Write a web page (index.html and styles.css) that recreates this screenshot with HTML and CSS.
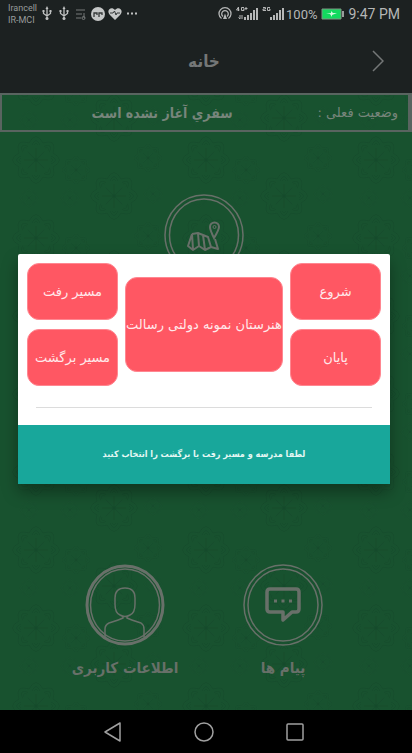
FILE: index.html
```html
<!DOCTYPE html>
<html lang="fa" dir="rtl">
<head>
<meta charset="utf-8">
<meta name="viewport" content="width=device-width, initial-scale=1">
<title>خانه</title>
<link rel="stylesheet" href="styles.css">
</head>
<body>
<div class="phone">
  <div class="statusbar" dir="ltr">
    <div class="carriers"><span>Irancell</span><span>IR-MCI</span></div>
    <svg class="notices" width="98" height="16" viewBox="0 0 98 16" fill="none" stroke="#bfc1c1">
      <g id="usb"><path d="M5 2v10M1.500 5v2.500L5 10l3.500-2.500V5" stroke-width="1.300"/><path d="M3.500 3L5 0l1.500 3zM.5 4h2v2h-2zM7.500 4h2v2h-2z" fill="#bfc1c1" stroke="none"/><circle cx="5" cy="12.500" r="1.500" fill="#bfc1c1" stroke="none"/></g>
      <use href="#usb" x="17"/>
      <path d="M34 4h9M34 8h6M34 12h5M42 7v5" stroke="#777b7b"/><circle cx="41.500" cy="12" r="1.500" stroke="#777b7b"/>
      <circle cx="56" cy="8" r="7" fill="#c5c7c7" stroke="none"/><path d="M52 11V7h3v2M57 11V7h3v2" stroke="#343838" stroke-width="1.300"/>
      <path d="M73 14L67.500 8.500C64 4 69.500-.5 73 4c3.500-4.500 9 0 5.500 4.500z" fill="#c5c7c7" stroke="none"/><path d="M68 7h3l1.500-2 1.500 4 1-2h3" stroke="#343838"/>
      <path d="M85 7.500h2M89 7.500h2M93 7.500h2" stroke-width="2"/>
    </svg>
    <svg class="signals" width="66" height="16" viewBox="0 0 66 16" fill="none" stroke="#b5b7b7">
      <path d="M3.500 12.500a6 6 0 1 1 7 0M5 10.500a3.300 3.300 0 1 1 4 0" stroke-width="1.300"/><path d="M7 7.500L9 13H5z" fill="#b5b7b7" stroke="none"/>
      <path d="M20.500 1l-2 3h3M20.500 1v4M26 1.500h-2.500v3H26V3h-1M28 1v3M26.500 2.500h3M22 9v4M20.500 11.500L22 13M24 13V9" />
      <path d="M27 14v-3M30 14V9M33 14V7M36 14V4M39 14V2" stroke-width="2"/>
      <path d="M45 1.500h2.500v1.500H45v1.500h3M52 1.500h-2.500v3H52V3h-1"/>
      <path d="M53 14v-3M56 14V9M59 14V7M62 14V4M65 14V2" stroke-width="2"/>
    </svg>
    <span class="percent">100%</span>
    <svg class="battery" width="23" height="12" viewBox="0 0 23 12"><path d="M1 1h19v10H1z" fill="#13d95f" stroke="#7c9683"/><path d="M21 3h2v6h-2z" fill="#9a9d9d"/><path d="M5 6l5-1V3l2 2h4l-5 2v2L9 6z" fill="#d5f8df"/></svg>
    <span class="clock">9:47 PM</span>
  </div>

  <header class="header">
    <h1>خانه</h1>
    <button class="back" type="button" aria-label="بازگشت">
      <svg width="12" height="22" viewBox="0 0 12 22" fill="none" stroke="#747777" stroke-width="1.500"><path d="M1 1l10 10L1 21"/></svg>
    </button>
  </header>

  <main class="main">
    <svg class="pattern" width="100%" height="100%" aria-hidden="true">
      <defs>
        <g id="petals"><path id="petal" d="M0 0V-12M-4-15Q0-24 4-15M-2-15Q0-19 2-15M-7-17Q0-30 7-17"/><use href="#petal" transform="rotate(45)"/><use href="#petal" transform="rotate(90)"/><use href="#petal" transform="rotate(135)"/><use href="#petal" transform="rotate(180)"/><use href="#petal" transform="rotate(225)"/><use href="#petal" transform="rotate(270)"/><use href="#petal" transform="rotate(315)"/><circle r="2" fill="#103f26"/></g>
        <pattern id="flowers" width="170" height="78" patternUnits="userSpaceOnUse" patternTransform="translate(0 38)">
          <g fill="none" stroke="#124628" stroke-width="1" opacity=".45">
            <use href="#petals" x="36" y="28"/>
            <use href="#petals" x="114" y="64"/><use href="#petals" x="114" y="-14"/>
            <use href="#petals" transform="translate(76 38) scale(.6)"/><use href="#petals" transform="translate(148 26) scale(.6)"/><use href="#petals" transform="translate(70 66) scale(.4)"/><use href="#petals" transform="translate(29 66) scale(.4)"/><use href="#petals" transform="translate(153 62) scale(.4)"/>
          </g>
        </pattern>
      </defs>
      <rect width="100%" height="100%" fill="#18522f"/><rect width="100%" height="100%" fill="url(#flowers)"/>
    </svg>
    <section class="trip">
      <span class="trip-label">وضعیت فعلی :</span>
      <strong class="trip-value">سفري آغاز نشده است</strong>
    </section>
    <nav class="menu">
      <a class="item map" href="#map" aria-label="نقشه">
        <svg width="80" height="82" viewBox="0 0 80 82" fill="none" stroke="#687069"><ellipse cx="40" cy="41" rx="39" ry="40" stroke-width="1.500"/><ellipse cx="40" cy="41" rx="34.500" ry="36" stroke-width="1.500"/><path d="M28 40l-4 12 5 4 6-4 6 4 6-3 7 2-3-10M28 40l6-1 5 2 2 15M34 39l1 13M28 40l1 15M39 41l5 2 3 10" stroke-width="2" stroke-linejoin="round"/><path d="M50 44c-3-6-4-9-4-11a4.500 4.500 0 0 1 9 0c0 2-2 6-5 11z" stroke-width="2"/><circle cx="50.500" cy="33" r="1.500"/></svg>
      </a>
      <div class="row">
        <a class="item" href="#messages">
          <svg width="80" height="82" viewBox="0 0 80 82" fill="none" stroke="#687069"><ellipse cx="40" cy="41" rx="39" ry="40" stroke-width="1.500"/><ellipse cx="40" cy="41" rx="35" ry="36" stroke-width="1.500"/><path d="M27 25h26q3 0 3 3v17q0 3-3 3h-4l-9 8v-8H27q-3 0-3-3V28q0-3 3-3z" stroke-width="3.500" stroke-linejoin="round"/><path d="M31 37h3M38.500 37h3M46 37h3" stroke-width="3"/></svg>
          <span>پیام ها</span>
        </a>
        <a class="item" href="#profile">
          <svg width="80" height="82" viewBox="0 0 80 82" fill="none" stroke="#687069"><ellipse cx="40" cy="41" rx="38" ry="39" stroke-width="3"/><ellipse cx="40" cy="41" rx="34.500" ry="36" stroke-width="1.500"/><path d="M30 34q0-10 10-10t10 10v6q0 9-5 11-5 3-10 0-5-2-5-11zM38 52v2q-4 2-14 5-4 2-4 6v8M42 52v2q4 2 14 5 3 2 3 6v8" stroke-width="1.500"/></svg>
          <span>اطلاعات کاربری</span>
        </a>
      </div>
    </nav>
  </main>

  <div class="navbar" dir="ltr">
    <button type="button" aria-label="Back"><svg width="20" height="22" viewBox="0 0 20 22"><path d="M17 2v18L2 11z"/></svg></button>
    <button type="button" aria-label="Home"><svg width="20" height="22" viewBox="0 0 20 22"><circle cx="10" cy="11" r="9"/></svg></button>
    <button type="button" aria-label="Recent"><svg width="20" height="22" viewBox="0 0 20 22"><rect x="2" y="3" width="16" height="16" rx="1"/></svg></button>
  </div>

  <div class="overlay">
    <div class="dialog" role="dialog" aria-label="انتخاب مسیر">
      <div class="choices">
        <div class="stack"><button type="button">شروع</button><button type="button">پایان</button></div>
        <button class="school" type="button">هنرستان نمونه دولتی رسالت</button>
        <div class="stack"><button type="button">مسیر رفت</button><button type="button">مسیر برگشت</button></div>
      </div>
      <hr>
      <p class="message">لطفا مدرسه و مسیر رفت یا برگشت را انتخاب کنید</p>
    </div>
  </div>
</div>
</body>
</html>
```
FILE: styles.css
```css
* { box-sizing: border-box; }
body { margin: 0; font-family: "DejaVu Sans", sans-serif; background: #000; }
button { font: inherit; border: 0; padding: 0; background: none; }
svg { display: block; flex: none; }
.phone { position: relative; min-height: 100vh; display: flex; flex-direction: column; }

.statusbar { height: 28px; padding: 0 12px 0 8px; display: flex; align-items: center; background: #1c2121; color: #b5b7b7; font-family: Roboto, sans-serif; }
.carriers { display: flex; flex-direction: column; width: 34px; font-size: 9px; line-height: 12px; color: #999c9c; }
.signals { margin-left: auto; }
.percent { margin: 0 4px 0 2px; font-size: 13px; }
.clock { margin-left: 4px; font-size: 14px; }

.header { position: relative; height: 66px; padding-right: 4px; display: flex; align-items: center; justify-content: center; background: #1c2121; border-bottom: 1px solid #596460; }
.header h1, .trip-value, .item { font-family: "DejaVu Sans Condensed", "DejaVu Sans", sans-serif; font-weight: bold; }
.header h1 { margin: 0; font-size: 17px; line-height: 24px; color: #747777; }
.back { position: absolute; right: 28px; }

.main { position: relative; flex: 1; display: flex; flex-direction: column; background: #18522f; }
.pattern { position: absolute; inset: 0; }
.trip { position: relative; height: 38px; padding: 0 10px; display: flex; align-items: center; border: 2px solid #596460; border-top-width: 1px; border-right-width: 4px; color: #77857b; }
.trip-label { width: 86px; font-size: 13px; white-space: nowrap; }
.trip-value { flex: 1; text-align: center; font-size: 14px; white-space: nowrap; }
.menu { position: relative; flex: 1; display: flex; flex-direction: column; align-items: center; justify-content: space-between; padding: 62px 4px 28px 0; }
.row { display: grid; grid-template-columns: 158px 158px; }
.item { display: flex; flex-direction: column; align-items: center; gap: 8px; color: #687069; font-size: 15px; line-height: 28px; text-decoration: none; white-space: nowrap; }

.navbar { height: 43px; padding-right: 4px; display: flex; align-items: center; justify-content: center; gap: 71px; background: #000; }
.navbar svg { fill: none; stroke: #a0a0a0; stroke-width: 1.5; stroke-linejoin: round; }

.overlay { position: absolute; inset: 28px 0 43px; display: flex; align-items: center; padding: 0 22px 0 18px; }
.dialog { flex: 1; min-width: 0; background: #fff; border-radius: 2px; box-shadow: 0 8px 16px rgba(0, 0, 0, .35); }
.choices { display: flex; align-items: center; gap: 7px; padding: 9px 9px 0; }
.stack { width: 91px; display: grid; gap: 9px; }
.choices button { height: 57px; border: 1px solid #ff8791; border-radius: 12px; background: #ff5763; color: #ffe9eb; font-size: 13px; white-space: nowrap; }
.choices .school { flex: 1; min-width: 0; height: 95px; }
.dialog hr { margin: 21px 18px 17px; border: 0; border-top: 1px solid #dcdcdc; }
.message { margin: 0; padding: 19px 0; background: #18a79b; color: #e4f7f4; font-family: "DejaVu Sans Condensed", "DejaVu Sans", sans-serif; font-size: 9px; font-weight: bold; line-height: 21px; text-align: center; }
```
